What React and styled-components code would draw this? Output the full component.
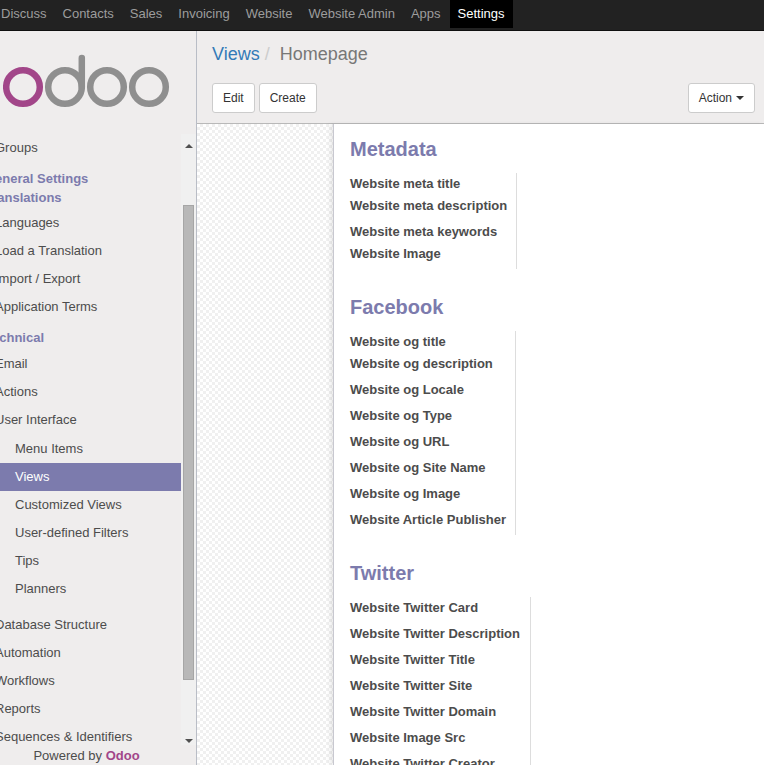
import React from 'react'
import styled, { createGlobalStyle } from 'styled-components'

const Global = createGlobalStyle`
  html, body { margin: 0; padding: 0; height: 100%; overflow: hidden; }
  body { font-family: "Liberation Sans", Arial, sans-serif; font-size: 13px; color: #4c4c4c; }
  #root { height: 100%; }
`

const Page = styled.div`
  width: 764px;
  height: 765px;
  display: flex;
  flex-direction: column;
  overflow: hidden;
`

const TopBar = styled.div`
  height: 30px;
  flex: none;
  background: #222;
  border-bottom: 1px solid #0f0f0f;
  display: flex;
  align-items: flex-start;
  padding-left: 1px;
  box-sizing: content-box;
`

const TopItem = styled.div`
  height: 28px;
  line-height: 28px;
  font-size: 13px;
  color: ${props => props.active ? '#fff' : '#9d9d9d'};
  background: ${props => props.active ? '#000' : 'transparent'};
  padding: ${props => props.active ? '0 8px' : '0'};
  margin-right: ${props => props.active ? '0' : '16px'};
  margin-left: ${props => props.active ? '-7px' : '0'};
`

const Body = styled.div`
  flex: 1;
  display: flex;
  min-height: 0;
`

const Sidebar = styled.div`
  width: 196px;
  flex: none;
  background: #efeded;
  border-right: 1px solid #b9bdc6;
  display: flex;
  flex-direction: column;
  overflow: hidden;
`

const Logo = styled.svg`
  display: block;
  margin: 23px 0 0 3px;
  flex: none;
`

const MenuArea = styled.div`
  flex: 1;
  display: flex;
  min-height: 0;
  margin-top: 24px;
`

const Menu = styled.div`
  width: 181px;
  flex: none;
  overflow: hidden;
`

const MenuHead = styled.div`
  font-weight: bold;
  color: #7c7bad;
  line-height: 19px;
  margin-left: -15px;
  margin-top: ${props => props.top || 0}px;
  white-space: nowrap;
`

const MenuRow = styled.div`
  height: 28px;
  line-height: 28px;
  white-space: nowrap;
  margin-left: -5px;
  margin-top: ${props => props.top || 0}px;
`

const SubRow = styled.div`
  height: 28px;
  line-height: 28px;
  padding-left: 15px;
  margin-top: ${props => props.top || 0}px;
  color: ${props => props.active ? '#fff' : '#4c4c4c'};
  background: ${props => props.active ? '#7c7bad' : 'transparent'};
`

const Scroll = styled.div`
  width: 15px;
  flex: none;
  background: #f0f0f0;
  position: relative;
`

const ScrollThumb = styled.div`
  width: 9px;
  height: 473px;
  margin: 71px 0 0 2px;
  background: #b8b8b8;
  border: 1px solid #a6a6a6;
`

const ArrowUp = styled.div`
  position: absolute;
  top: 10px;
  left: 4px;
  border-left: 4px solid transparent;
  border-right: 4px solid transparent;
  border-bottom: 4px solid #505050;
`

const ArrowDown = styled.div`
  position: absolute;
  bottom: 2px;
  left: 4px;
  border-left: 4px solid transparent;
  border-right: 4px solid transparent;
  border-top: 4px solid #505050;
`

const Powered = styled.div`
  height: 19px;
  flex: none;
  padding-top: 1px;
  line-height: 20px;
  text-align: center;
  padding-right: 23px;
  b { color: #a24689; }
`

const Main = styled.div`
  flex: 1;
  display: flex;
  flex-direction: column;
  min-width: 0;
`

const Header = styled.div`
  height: 92px;
  flex: none;
  background: #efeded;
  border-bottom: 1px solid #b9b9b9;
  padding: 0 9px 0 15px;
  box-sizing: content-box;
`

const Crumbs = styled.div`
  display: flex;
  height: 47px;
  align-items: center;
  font-size: 18px;
  color: #777;
  a { color: #337ab7; }
  span { color: #ccc; margin: 0 10px 0 5px; }
`

const Buttons = styled.div`
  display: flex;
  gap: 4px;
  margin-top: 5px;
`

const Btn = styled.div`
  height: 28px;
  line-height: 28px;
  padding: 0 10px;
  font-size: 12px;
  color: #333;
  background: #fff;
  border: 1px solid #ccc;
  border-radius: 3px;
  margin-left: ${props => props.end ? 'auto' : '0'};
  display: flex;
  align-items: center;
  gap: 4px;
`

const Caret = styled.i`
  border-left: 4px solid transparent;
  border-right: 4px solid transparent;
  border-top: 4px solid #333;
`

const Content = styled.div`
  flex: 1;
  min-height: 0;
  display: flex;
  background-color: #fff;
  background-image:
    linear-gradient(45deg, #f0f0f0 25%, transparent 25%, transparent 75%, #f0f0f0 75%),
    linear-gradient(45deg, #f0f0f0 25%, transparent 25%, transparent 75%, #f0f0f0 75%);
  background-size: 6px 6px;
  background-position: 0 0, 3px 3px;
`

const Gutter = styled.div`
  width: 136px;
  flex: none;
`

const Sheet = styled.div`
  flex: 1;
  background: #fff;
  border-left: 1px solid #c8c8d0;
  box-shadow: -3px 0 4px rgba(0, 0, 0, 0.08);
  padding-left: 16px;
  overflow: hidden;
`

const Title = styled.h2`
  margin: ${props => props.top}px 0 0;
  font-size: 20px;
  line-height: 24px;
  font-weight: bold;
  color: #7c7bad;
`

const Group = styled.div`
  width: ${props => props.width}px;
  border-right: 1px solid #ddd;
  margin-top: 12px;
  display: flex;
  flex-direction: column;
`

const Label = styled.div`
  height: ${props => props.h || 26}px;
  line-height: 22px;
  font-weight: bold;
  color: #4c4c4c;
  white-space: nowrap;
`

const navItems = ['Discuss', 'Contacts', 'Sales', 'Invoicing', 'Website', 'Website Admin', 'Apps']

const OdooLogo = () => (
  <Logo width="170" height="56" viewBox="0 0 170 56">
    <g fill="none" strokeWidth="6.5">
      <circle cx="20" cy="33" r="16.8" stroke="#a24689" />
      <g stroke="#8f8f8f">
        <circle cx="62" cy="33" r="16.8" />
        <path d="M78.8 33V4" strokeLinecap="round" />
        <circle cx="104" cy="33" r="16.8" />
        <circle cx="146" cy="33" r="16.8" />
      </g>
    </g>
  </Logo>
)

const metadata = [['Website meta title', 22], ['Website meta description', 26], ['Website meta keywords', 22], ['Website Image', 26]]
const facebook = [['Website og title', 22], ['Website og description', 26], ['Website og Locale', 26], ['Website og Type', 26], ['Website og URL', 26], ['Website og Site Name', 26], ['Website og Image', 26], ['Website Article Publisher', 26]]
const twitter = ['Website Twitter Card', 'Website Twitter Description', 'Website Twitter Title', 'Website Twitter Site', 'Website Twitter Domain', 'Website Image Src', 'Website Twitter Creator']

const App = () => (
  <Page>
    <Global />
    <TopBar>
      {navItems.map(item => <TopItem key={item}>{item}</TopItem>)}
      <TopItem active>Settings</TopItem>
    </TopBar>
    <Body>
      <Sidebar>
        <OdooLogo />
        <MenuArea>
          <Menu>
            <MenuRow>Groups</MenuRow>
            <MenuHead top={7}>General Settings</MenuHead>
            <MenuHead>Translations</MenuHead>
            <MenuRow top={2}>Languages</MenuRow>
            <MenuRow>Load a Translation</MenuRow>
            <MenuRow>Import / Export</MenuRow>
            <MenuRow>Application Terms</MenuRow>
            <MenuHead top={7}>Technical</MenuHead>
            <MenuRow top={3}>Email</MenuRow>
            <MenuRow>Actions</MenuRow>
            <MenuRow>User Interface</MenuRow>
            <SubRow top={1}>Menu Items</SubRow>
            <SubRow active>Views</SubRow>
            <SubRow>Customized Views</SubRow>
            <SubRow>User-defined Filters</SubRow>
            <SubRow>Tips</SubRow>
            <SubRow>Planners</SubRow>
            <MenuRow top={8}>Database Structure</MenuRow>
            <MenuRow>Automation</MenuRow>
            <MenuRow>Workflows</MenuRow>
            <MenuRow>Reports</MenuRow>
            <MenuRow>Sequences &amp; Identifiers</MenuRow>
          </Menu>
          <Scroll>
            <ArrowUp />
            <ScrollThumb />
            <ArrowDown />
          </Scroll>
        </MenuArea>
        <Powered>Powered by <b>Odoo</b></Powered>
      </Sidebar>
      <Main>
        <Header>
          <Crumbs><a>Views</a><span>/</span>Homepage</Crumbs>
          <Buttons>
            <Btn>Edit</Btn>
            <Btn>Create</Btn>
            <Btn end>Action <Caret /></Btn>
          </Buttons>
        </Header>
        <Content>
          <Gutter />
          <Sheet>
            <Title top={13}>Metadata</Title>
            <Group width={166}>
              {metadata.map(([t, h]) => <Label key={t} h={h}>{t}</Label>)}
            </Group>
            <Title top={26}>Facebook</Title>
            <Group width={165}>
              {facebook.map(([t, h]) => <Label key={t} h={h}>{t}</Label>)}
            </Group>
            <Title top={26}>Twitter</Title>
            <Group width={180}>
              {twitter.map(t => <Label key={t}>{t}</Label>)}
            </Group>
          </Sheet>
        </Content>
      </Main>
    </Body>
  </Page>
)

export default App
